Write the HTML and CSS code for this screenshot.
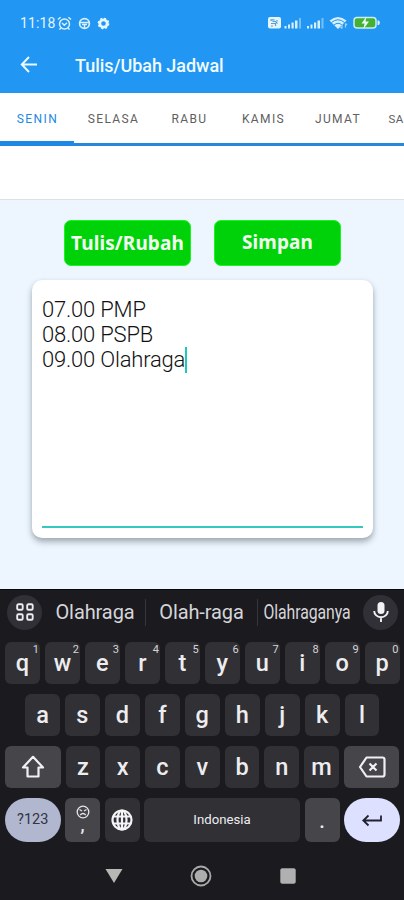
FILE: index.html
```
<!DOCTYPE html>
<html lang="id">
<head>
<meta charset="utf-8">
<title>Tulis/Ubah Jadwal</title>
<link rel="stylesheet" href="styles.css">
</head>
<body>
<header class="top">
  <div class="status">
    <span class="time">11:18</span>
    <svg class="s-alarm" width="15" height="15" viewBox="0 0 15 15" fill="none" stroke="#d9f0fb" stroke-width="1.5"><circle cx="7.5" cy="8" r="5"/><path d="M1 3.5 3.6 1.2M14 3.5 11.4 1.2M5 7l2.3 2.2L10 6.8M3.8 12l-1.3 1.6M11.2 12l1.3 1.6"/></svg>
    <svg class="s-wheel" width="13" height="13" viewBox="0 0 13 13" fill="none" stroke="#d9f0fb" stroke-width="1.7"><circle cx="6.5" cy="6.5" r="4.9"/><path d="M2 5.5h9M6.5 7v4M4 7.5h5" stroke-width="1.4"/></svg>
    <svg class="s-gear" width="13" height="13" viewBox="0 0 13 13" fill="none" stroke="#e6f7fc"><circle cx="6.5" cy="6.5" r="3.7" stroke-width="2.8"/><circle cx="6.5" cy="6.5" r="5.2" stroke-width="1.3" stroke-dasharray="2.1 1.98"/></svg>
    <span class="grow"></span>
    <svg width="114" height="16" viewBox="0 0 114 16">
      <rect x="1" y="2" width="13" height="11.5" rx="2" fill="#e3f5fd"/>
      <path d="M4 6V4.800h3.500M4 8.500h4.500v2.500M5.500 6.500h3l2 2M10 5v1.500M4 11h2" fill="none" stroke="#5f9fcb" stroke-width="1.200"/>
      <g fill="#d5effd"><rect x="17.500" y="11" width="2" height="2.500"/><rect x="21" y="9.500" width="2" height="4"/><rect x="24.500" y="7.500" width="2.200" height="6"/><rect x="28" y="5.500" width="2.500" height="8"/><rect x="40" y="11" width="2" height="2.500"/><rect x="43.500" y="9.500" width="2" height="4"/><rect x="47" y="7.500" width="2.200" height="6"/><rect x="50.500" y="5.500" width="2.500" height="8"/></g>
      <path d="M32 3h2v10.500h-2zM54.500 3h2v10.500h-2z" fill="#77bff8"/>
      <path d="M62.500 5.500Q71-1.500 79.500 5.500L71 14Z" fill="#d5effd"/>
      <path d="M64.500 7.500Q71 2 77.500 7.500M67 10Q71 6.500 75 10" fill="none" stroke="#2196f3" stroke-width="1"/>
      <path d="M75 9.500v4M73.500 12l1.500 1.700M78.500 12.500v-4M80 10l-1.500-1.700" fill="none" stroke="#9ed4f7" stroke-width="1.200"/>
      <rect x="87" y="2.500" width="22" height="10.500" rx="3" fill="#45b033" stroke="#c8edf0" stroke-width="1.500"/>
      <path d="M110.500 5.500h1.500l1 2.300-1 2.200h-1.500z" fill="#d9f3fb"/>
      <path d="M99.500 1.500 94.500 8.500h3l-1 5.500 5.500-7.500h-3.500z" fill="#e7fbf5"/>
    </svg>
  </div>
  <div class="appbar">
    <svg width="18" height="18" viewBox="0 0 18 18" fill="none" stroke="#eafaff" stroke-width="2"><path d="M17 8.500H2M9 1 1.800 8.500 9 16"/></svg>
    <h1>Tulis/Ubah Jadwal</h1>
  </div>
</header>
<nav class="tabs">
  <span class="tab on">SENIN</span><span class="tab selasa">SELASA</span><span class="tab rabu">RABU</span><span class="tab kamis">KAMIS</span><span class="tab jumat">JUMAT</span><span class="tab sabtu">SA</span>
</nav>
<div class="blank"></div>
<main>
  <div class="actions"><button class="btn">Tulis/Rubah</button><button class="btn save">Simpan</button></div>
  <section class="card">
    <div class="note"><p>07.00 PMP</p><p>08.00 PSPB</p><p>09.00 Olahraga<i class="caret"></i></p></div>
  </section>
</main>
<section class="keyboard">
  <div class="suggest">
    <span class="round"><svg width="18" height="18" viewBox="0 0 18 18" fill="none" stroke="#ececf0" stroke-width="1.900"><rect x="1.200" y="1.200" width="5.500" height="5.500" rx="1.300"/><rect x="11.200" y="1.200" width="5.500" height="5.500" rx="1.300"/><rect x="1.200" y="11.200" width="5.500" height="5.500" rx="1.300"/><rect x="11.200" y="11.200" width="5.500" height="5.500" rx="1.300"/></svg></span>
    <span class="word w1">Olahraga</span><span class="word w2">Olah-raga</span><span class="word w3"><b>Olahraganya</b></span>
    <span class="round"><svg width="18" height="22" viewBox="0 0 18 22"><rect x="5.500" y="1" width="7" height="12" rx="3.500" fill="#f2f2f5"/><path d="M2.200 10a6.800 6.200 0 0 0 13.600 0M9 16v5" fill="none" stroke="#f2f2f5" stroke-width="1.900"/></svg></span>
  </div>
  <div class="row">
    <span class="key">q<sup>1</sup></span><span class="key">w<sup>2</sup></span><span class="key">e<sup>3</sup></span><span class="key">r<sup>4</sup></span><span class="key">t<sup>5</sup></span><span class="key">y<sup>6</sup></span><span class="key">u<sup>7</sup></span><span class="key">i<sup>8</sup></span><span class="key">o<sup>9</sup></span><span class="key">p<sup>0</sup></span>
  </div>
  <div class="row mid">
    <span class="key">a</span><span class="key">s</span><span class="key">d</span><span class="key">f</span><span class="key">g</span><span class="key">h</span><span class="key">j</span><span class="key">k</span><span class="key">l</span>
  </div>
  <div class="row">
    <span class="key wide alt"><svg width="26" height="24" viewBox="0 0 26 24" fill="none" stroke="#f0f0f3" stroke-width="2.200" stroke-linejoin="round"><path d="M13 1.800 23 12.500h-4.500v9h-11v-9H3Z"/></svg></span>
    <span class="key">z</span><span class="key">x</span><span class="key">c</span><span class="key">v</span><span class="key">b</span><span class="key">n</span><span class="key">m</span>
    <span class="key wide alt"><svg width="28" height="22" viewBox="0 0 28 22" fill="none" stroke="#f0f0f3" stroke-width="2.200" stroke-linejoin="round"><path d="M8.500 1.500H24.500q2 0 2 2v15q0 2-2 2H8.500L2 11ZM11.500 7.500l7 7M18.500 7.500l-7 7"/></svg></span>
  </div>
  <div class="row last">
    <span class="key wide sym">?123</span>
    <span class="key alt emoji"><svg width="14" height="14" viewBox="0 0 14 14" fill="none" stroke="#e6e6ea" stroke-width="1.300"><circle cx="7" cy="7" r="5.800"/><path d="M3.500 4.500 6 6M10.500 4.500 8 6M4.200 10q2.800-3 5.600 0"/></svg><small>,</small></span>
    <span class="key"><svg width="22" height="22" viewBox="0 0 22 22" fill="none" stroke="#f4f4f6" stroke-width="2.200"><circle cx="11" cy="11" r="9.500"/><ellipse cx="11" cy="11" rx="4.500" ry="9.500"/><path d="M2 7.500h18M2 14.500h18M11 1v20"/></svg></span>
    <span class="key space">Indonesia</span>
    <span class="key alt dot">.</span>
    <span class="key wide enter"><svg width="22" height="16" viewBox="0 0 22 16" fill="none" stroke="#20222f" stroke-width="1.800"><path d="M20 3.500v5H2.500M7.500 3.500 2.300 8.500l5.200 5"/></svg></span>
  </div>
  <div class="sysnav">
    <svg width="20" height="16" viewBox="0 0 20 16"><path d="M1.500 1h17L10 15Z" fill="#b7b7b5"/></svg>
    <svg width="22" height="22" viewBox="0 0 22 22"><circle cx="11" cy="11" r="9.500" fill="none" stroke="#a9a9a9" stroke-width="1.800"/><circle cx="11" cy="11" r="6.300" fill="#adadad"/></svg>
    <svg width="16" height="16" viewBox="0 0 16 16"><rect x=".3" y=".3" width="15.400" height="15.400" rx="2" fill="#b0b0b0"/></svg>
  </div>
</section>
</body>
</html>
```
FILE: styles.css
```
* { box-sizing: border-box; }
body { margin: 0; width: 404px; height: 900px; overflow: hidden; display: flex; flex-direction: column; background: #edf6fe; font-family: Roboto, sans-serif; }
svg { display: block; flex: none; }
.top { height: 93px; flex: none; background: #2196f3; }
.status { height: 46px; display: flex; align-items: center; padding: 0 23px 0 20px; color: #e4f5fd; }
.time { width: 37px; font-size: 14px; letter-spacing: .1px; white-space: nowrap; }
.s-wheel { margin-left: 6px; }
.s-gear { margin-left: 6px; }
.grow { flex: 1; }
.appbar { height: 38px; display: flex; align-items: center; padding-left: 20px; gap: 37px; }
h1 { margin: 0; color: #f0fbff; font-size: 18px; font-weight: 500; letter-spacing: -.04px; white-space: nowrap; }
.tabs { height: 53px; flex: none; display: flex; background: #fff; border-bottom: 3px solid #2488dd; box-shadow: 0 1px 0 #a9d5fb; }
.tab { flex: none; height: 53px; width: 74px; text-align: center; line-height: 52px; font-size: 12px; letter-spacing: 1.4px; color: #606060; }
.on { color: #2189df; padding-left: 1px; border-bottom: 5px solid #1e88e5; }
.selasa { width: 79px; }
.rabu { width: 73px; }
.kamis { width: 75px; }
.jumat { width: 74px; }
.sabtu { width: 29px; text-align: left; padding-left: 13.5px; font-size: 11.5px; letter-spacing: .5px; }
.blank { height: 54px; flex: none; background: #fff; border-bottom: 1.5px solid #dce1e5; }
main { height: 389px; flex: none; padding: 20px 31px 0 32px; }
.actions { display: flex; gap: 23px; padding-left: 32px; }
.btn { width: 127px; height: 46px; padding: 0 0 1px; border: 1.5px solid #16f51c; border-radius: 7px; background: #00d20a; color: #f2fff0; font: 700 19px "Noto Sans", sans-serif; letter-spacing: .1px; white-space: nowrap; }
.save { padding-bottom: 3px; }
.card { height: 258px; margin-top: 14px; border-radius: 10px; background: #fff; padding: 17px 10px 10px; box-shadow: 0 4px 6px rgba(70, 80, 90, .42), 0 1px 4px rgba(70, 80, 90, .1); }
.note { height: 231px; border-bottom: 2px solid #35c9bd; }
.note p { margin: 0; height: 25px; display: flex; align-items: center; color: #111; font-size: 22px; font-weight: 300; letter-spacing: -.2px; white-space: nowrap; }
.caret { width: 2px; height: 26px; background: #1fc8bd; }
.keyboard { height: 311px; flex: none; background: #1b1a1f; border-top: 1px solid #08080c; padding: 4px 4.500px 0 5px; }
.suggest { height: 36px; display: flex; align-items: center; padding: 0 1px 0 2px; }
.round { width: 35px; height: 35px; flex: none; border-radius: 50%; background: #303036; display: flex; align-items: center; justify-content: center; }
.word { color: #d5d5d9; font-size: 20px; text-align: center; white-space: nowrap; height: 27px; line-height: 26px; flex: none; letter-spacing: -.1px; }
.w1 { width: 104px; border-right: 1px solid #36353b; padding-left: 3px; }
.w2 { width: 112px; border-right: 1px solid #36353b; }
.w3 { width: 105px; display: flex; justify-content: center; padding-right: 7px; }
.w3 b { font-weight: 400; transform: scaleX(.79); }
.row { display: flex; gap: 5px; height: 42px; margin-top: 12px; }
.row + .row { margin-top: 10px; }
.row .key { flex: 1 1 0; }
.mid { padding: 0 20px; }
.key { min-width: 0; border-radius: 6px; background: #313035; color: #ededf0; display: flex; align-items: center; justify-content: center; font-size: 23.5px; font-weight: 500; padding-bottom: 1px; position: relative; }
.key sup { position: absolute; top: 2px; right: 1px; font-size: 11px; font-weight: 400; line-height: 12px; color: #d4d4d8; }
.row .wide { flex: 0 0 55.5px; }
.alt { background: #46454a; }
.last { height: 44px; gap: 4.5px; }
.last .key { flex: 0 0 35px; }
.last .wide { flex: 0 0 55.5px; }
.row .sym { border-radius: 22px; background: #b0b7cf; color: #303443; font-size: 14.5px; font-weight: 400; }
.emoji { flex-direction: column; }
.emoji small { font-size: 18px; line-height: 12px; height: 16px; }
.last .space { flex: 1; font-size: 13.2px; font-weight: 400; }
.dot { padding-top: 3px; font-size: 20px; }
.enter { border-radius: 22px; background: #dde1ff; }
.sysnav { height: 68px; display: flex; align-items: center; justify-content: center; gap: 68px; padding-right: 4px; }
.sysnav svg:first-child { margin-right: -2px; }
```
